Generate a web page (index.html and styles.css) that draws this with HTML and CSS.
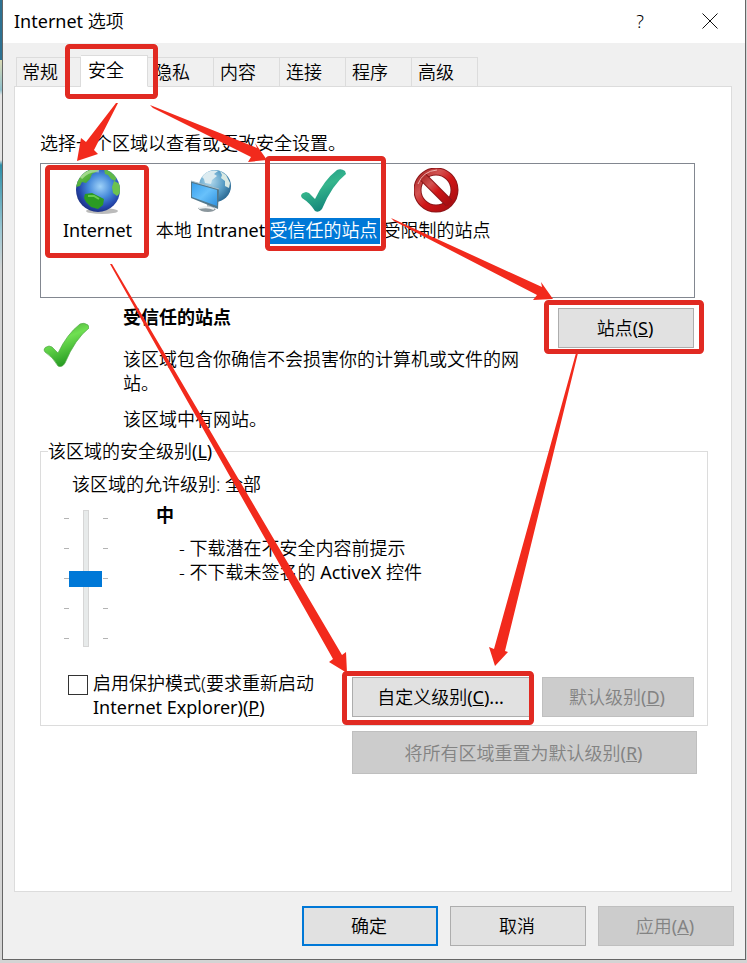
FILE: index.html
```html
<!DOCTYPE html>
<html lang="zh-CN">
<head>
<meta charset="utf-8">
<meta name="viewport" content="width=device-width, initial-scale=1">
<title>Internet 选项</title>
<link rel="stylesheet" href="styles.css">
</head>
<body>
<main class="dialog">
  <header class="titlebar">
    <h1 class="title"><span class="latin">Internet</span> 选项</h1>
    <button class="title-button" type="button" aria-label="帮助">?</button>
    <button class="title-button" type="button" aria-label="关闭">
      <svg width="16" height="16" viewBox="0 0 16 16"><path d="M.5.5l15 15M15.500.5l-15 15" stroke="#111" stroke-width="1" fill="none"/></svg>
    </button>
  </header>

  <nav class="tabs" role="tablist">
    <button class="tab" type="button" role="tab">常规</button>
    <button class="tab tab-active" type="button" role="tab" aria-selected="true">安全</button>
    <button class="tab" type="button" role="tab">隐私</button>
    <button class="tab" type="button" role="tab">内容</button>
    <button class="tab" type="button" role="tab">连接</button>
    <button class="tab" type="button" role="tab">程序</button>
    <button class="tab" type="button" role="tab">高级</button>
  </nav>

  <section class="page">
    <p class="intro">选择一个区域以查看或更改安全设置。</p>

    <div class="zones">
      <button class="zone" type="button">
        <svg class="zone-icon" viewBox="0 0 46 46">
          <defs>
            <radialGradient id="sea" cx=".55" cy=".42" r=".6"><stop offset="0" stop-color="#9fd2f8"/><stop offset=".45" stop-color="#4589da"/><stop offset=".8" stop-color="#2547ad"/><stop offset="1" stop-color="#1b2f80"/></radialGradient>
            <linearGradient id="land" x1="0" y1="0" x2="1" y2="1"><stop offset="0" stop-color="#8edb5a"/><stop offset="1" stop-color="#1f8a24"/></linearGradient>
            <clipPath id="ball"><circle cx="23" cy="22" r="22"/></clipPath>
          </defs>
          <ellipse cx="27" cy="43" rx="16" ry="3" fill="#bbb"/>
          <circle cx="23" cy="22" r="22" fill="url(#sea)"/>
          <g clip-path="url(#ball)">
            <path d="M3 10Q9 1 21 0l4 1-4 3-4 2-2 5-4 4-4-1-2 4-4 1-3-5z" fill="url(#land)"/>
            <path d="M29 1l7 2 6 6-2 4-4-2-3-4-3-1z" fill="#5fb84a"/>
            <path d="M39 13l6 3 1 8-4 4-4-3-1-6z" fill="#6cc24e"/>
            <path d="M10 26l7-1 6 3 6 3-1 6-5 4-7-2-5-5-2-4z" fill="#2b9b23"/>
            <path d="M13 28l6 0 5 3" stroke="#69c94e" stroke-width="2" fill="none"/>
            <path d="M6 10Q14 1 24 3" stroke="#ddf7cf" stroke-width="3" fill="none" opacity=".5"/>
          </g>
        </svg>
        <span class="zone-label latin">Internet</span>
      </button>
      <button class="zone" type="button">
        <svg class="zone-icon" viewBox="0 0 46 46">
          <defs>
            <radialGradient id="sea2" cx=".35" cy=".35" r=".7"><stop offset="0" stop-color="#b5dbee"/><stop offset=".6" stop-color="#5b9fc7"/><stop offset="1" stop-color="#2b6a94"/></radialGradient>
            <linearGradient id="screen" x1="0" y1="0" x2="1" y2="1"><stop offset="0" stop-color="#38a0ed"/><stop offset=".5" stop-color="#68c1fb"/><stop offset="1" stop-color="#2f91df"/></linearGradient>
          </defs>
          <circle cx="27" cy="18" r="16" fill="url(#sea2)"/>
          <path d="M14 9Q20 1 30 3l-4 3 3 2-5 4-1 4-6-1-1-4z" fill="#dcebf0"/>
          <path d="M32 3l6 4 4 8-1 5-4-2 0-5-4-3 1-3z" fill="#d9e9e3"/>
          <path d="M19 34l7 2v5h-7z" fill="#a9b6bc"/>
          <path d="M10 40q10-3 18 1-2 3-8 3-8 0-10-4z" fill="#8b979d"/>
          <path d="M11 40q9-2 15 1" stroke="#eef1f2" stroke-width="2" fill="none"/>
          <path d="M3 13l28 8-1 20L3 30z" fill="#52788c"/>
          <path d="M4 15l25 7v16L4 29z" fill="url(#screen)"/>
          <path d="M3 13l28 8" stroke="#a9c1cc" stroke-width="1" fill="none"/>
        </svg>
        <span class="zone-label">本地 <span class="latin">Intranet</span></span>
      </button>
      <button class="zone" type="button" aria-pressed="true">
        <svg class="zone-icon" viewBox="0 0 46 46">
          <defs><linearGradient id="teal" x1="0" y1="0" x2=".4" y2="1"><stop offset="0" stop-color="#1d9387"/><stop offset=".5" stop-color="#35b58c"/><stop offset="1" stop-color="#14857a"/></linearGradient></defs>
          <path d="M0 28q0-3 5-4l3 1 6 6Q23 12 36 2q4-2 8 1l1 3Q31 17 21 41q-3 4-7 2Q9 35 1 30z" fill="url(#teal)"/>
        </svg>
        <span class="zone-label zone-label-selected">受信任的站点</span>
      </button>
      <button class="zone" type="button">
        <svg class="zone-icon" viewBox="0 0 46 46">
          <defs><linearGradient id="red" x1="0" y1="0" x2="1" y2="1"><stop offset="0" stop-color="#a92524"/><stop offset=".3" stop-color="#d35352"/><stop offset=".55" stop-color="#cf1516"/><stop offset="1" stop-color="#a40d11"/></linearGradient></defs>
          <circle cx="22" cy="22" r="18.500" fill="none" stroke="#8c1518" stroke-width="8"/>
          <circle cx="22" cy="22" r="18.500" fill="none" stroke="url(#red)" stroke-width="6"/>
          <path d="M9 9l26 26" stroke="#8c1518" stroke-width="9"/>
          <path d="M8 8l28 28" stroke="url(#red)" stroke-width="7"/>
          <path d="M4 16Q9 3 23 2" stroke="#efb0ae" stroke-width="1" fill="none"/>
        </svg>
        <span class="zone-label">受限制的站点</span>
      </button>
    </div>

    <div class="summary">
      <svg class="summary-icon" viewBox="0 0 46 46">
        <defs><linearGradient id="green" x1="0" y1="0" x2=".4" y2="1"><stop offset="0" stop-color="#39952d"/><stop offset=".45" stop-color="#70e052"/><stop offset="1" stop-color="#249921"/></linearGradient></defs>
        <path d="M1 28q0-3 5-4l3 1 6 6Q24 12 37 2q4-2 8 1l1 3Q32 17 22 41q-3 5-7 3Q10 35 2 30z" fill="url(#green)" stroke="#50a846" stroke-width=".7"/>
      </svg>
      <div class="summary-text">
        <h2 class="heading">受信任的站点</h2>
        <p class="summary-about">该区域包含你确信不会损害你的计算机或文件的网站。</p>
        <p>该区域中有网站。</p>
      </div>
      <button class="button" type="button">站点<span class="latin">(<u>S</u>)</span></button>
    </div>

    <fieldset class="level">
      <legend><label for="level">该区域的安全级别<span class="latin">(<u>L</u>)</span></label></legend>
      <p class="allowed">该区域的允许级别: 全部</p>
      <div class="level-row">
        <input class="slider" id="level" type="range" min="0" max="4" value="2">
        <div>
          <h2 class="heading">中</h2>
          <ul class="rules">
            <li>- 下载潜在不安全内容前提示</li>
            <li>- 不下载未签名的 <span class="latin">ActiveX</span> 控件</li>
          </ul>
        </div>
      </div>
      <div class="level-actions">
        <input class="check" id="protect" type="checkbox">
        <label class="check-label" for="protect">启用保护模式(要求重新启动 <span class="latin">Internet Explorer)(<u>P</u>)</span></label>
        <button class="button button-custom" type="button">自定义级别<span class="latin">(<u>C</u>)...</span></button>
        <button class="button button-default" type="button" disabled>默认级别<span class="latin">(<u>D</u>)</span></button>
      </div>
    </fieldset>
    <button class="button button-reset" type="button" disabled>将所有区域重置为默认级别<span class="latin">(<u>R</u>)</span></button>
  </section>

  <footer class="footer">
    <button class="button button-primary" type="button">确定</button>
    <button class="button" type="button">取消</button>
    <button class="button" type="button" disabled>应用<span class="latin">(<u>A</u>)</span></button>
  </footer>
</main>

<svg class="marks" width="747" height="963" viewBox="0 0 747 963" aria-hidden="true">
  <g fill="none" stroke="#e12a22" stroke-width="5">
    <rect x="67.500" y="46.500" width="88" height="50" rx="2"/>
    <rect x="47.500" y="167.500" width="99" height="88" rx="2"/>
    <rect x="267.500" y="158.500" width="116" height="90" rx="2"/>
    <rect x="546.500" y="302.500" width="155" height="49" rx="2"/>
    <rect x="344.500" y="673.500" width="187" height="49" rx="2"/>
  </g>
  <g fill="#f22a1c">
    <path d="M116 103h2L94 150l4 4-21 7 4-23 5 4z"/>
    <path d="M150 105l107 43-2-5 12 17-19 2 3-5-98-49z"/>
    <path d="M391 218l151 69-1-5 12 17-20 1 4-5-143-74z"/>
    <path d="M110 264h2l230 391 4-3 1 21-18-11 4-3z"/>
    <path d="M576 353h2l-73 298 3 1-13 14-6-19 5 2z"/>
  </g>
</svg>
</body>
</html>
```
FILE: styles.css
```css
* { box-sizing: border-box; }

html { background: #d4d4d4; }

body {
  margin: 0;
  position: relative;
  background: linear-gradient(#2d7191 0, #2d7191 60px, #d9d9b5 60px, #8fc0cc 90px, #e4e4e4 95px, #e4e4e4 160px, #2d8fa8 165px, #9cc8d4 230px, #d4d4d4 270px) 0 0 / 2px 100% no-repeat;
  color: #000;
  font: 350 18px/24px "Noto Sans", "Noto Sans CJK SC", sans-serif;
}

h1, h2, p, ul { margin: 0; padding: 0; font-size: inherit; }
ul { list-style: none; }
button, input { font: inherit; color: inherit; margin: 0; }
.latin { font-weight: 400; }

.dialog {
  display: flex;
  flex-direction: column;
  min-height: calc(100vh - 3px);
  margin: 0 1px 0 2px;
  border: 1px solid #666;
  border-top: 0;
  background: #f0f0f0;
}

.titlebar {
  display: flex;
  align-items: center;
  height: 43px;
  padding: 0 0 2px 11px;
  background: #fff;
}
.title { flex: 1; font-weight: inherit; }
.title-button {
  display: flex;
  align-items: center;
  justify-content: center;
  width: 70px;
  height: 40px;
  padding: 0;
  border: 0;
  background: none;
}

.tabs {
  display: flex;
  align-items: flex-end;
  height: 44px;
  margin: 0 13px -1px;
}
.tab {
  width: 66px;
  height: 30px;
  padding: 0 6px;
  border: 1px solid #dcdcdc;
  border-left-width: 0;
  background: #f0f0f0;
  text-align: left;
}
.tab:first-child { width: 65px; padding: 0 5px; border-left-width: 1px; }
.tab-active {
  z-index: 1;
  width: 67px;
  height: 32px;
  padding: 0 7px 2px;
  border-bottom-color: #fff;
  background: #fff;
}

.page {
  flex: 1;
  display: flex;
  flex-direction: column;
  margin: 0 13px 0 11px;
  padding: 44px 23px 0 25px;
  border: 1px solid #dcdcdc;
  background: #fff;
}

.zones {
  display: flex;
  align-items: flex-start;
  height: 135px;
  margin: 8px 13px 0 0;
  padding-top: 4px;
  border: 1px solid #828790;
}
.zone {
  display: flex;
  flex-direction: column;
  align-items: center;
  width: 113px;
  padding: 0;
  border: 0;
  background: none;
  white-space: nowrap;
}
.zone-icon { width: 46px; height: 46px; margin-bottom: 4px; }
.zone-label { height: 26px; padding: 0 2px; }
.zone-label-selected { background: #0078d7; color: #fff; }

.summary {
  display: flex;
  align-items: flex-start;
  padding: 7px 14px 0 3px;
}
.summary-icon { width: 46px; height: 46px; margin: 17px 34px 0 0; }
.summary-text { flex: 1; }
.summary .button { margin-top: 3px; margin-left: 32px; }
.summary-about { margin: 18px 0 12px; }
.heading { font-weight: 700; }

.button {
  flex: none;
  width: 136px;
  height: 40px;
  padding: 0 2px 0 0;
  border: 1px solid #adadad;
  background: #e1e1e1;
}
.button:disabled { border-color: #bfbfbf; background: #ccc; color: #838383; }
.button-primary { border: 2px solid #0078d7; }

.level {
  margin: 8px 0 0;
  padding: 9px 13px 6px 23px;
  border: 1px solid #dcdcdc;
}
.level legend { margin-left: -16px; padding: 0; }
.allowed { padding-left: 8px; }
.level-row { display: flex; gap: 48px; margin-top: 7px; }
.rules { padding: 9px 0 0 23px; }

.slider {
  appearance: none;
  writing-mode: vertical-lr;
  width: 44px;
  height: 137px;
  margin-top: 7px;
  background:
    repeating-linear-gradient(#b4b4b4 0 1px, transparent 1px 30px) 0 8px / 5px 121px no-repeat,
    repeating-linear-gradient(#b4b4b4 0 1px, transparent 1px 30px) 100% 8px / 5px 121px no-repeat;
}
.slider::-webkit-slider-runnable-track {
  width: 6px;
  height: 137px;
  border: 1px solid #d6d6d6;
  background: #e7eaea;
}
.slider::-webkit-slider-thumb {
  appearance: none;
  width: 33px;
  height: 16px;
  margin-left: -15px;
  background: #0078d7;
}

.level-actions { display: flex; align-items: flex-start; margin-top: 24px; }
.check {
  appearance: none;
  flex: none;
  width: 20px;
  height: 20px;
  margin: 4px 5px 0 4px;
  border: 1px solid #333;
  background: #fff;
}
.check-label { flex: 1; }
.button-custom { width: 179px; margin: 6px 11px 0 31px; }
.button-default { width: 152px; margin-top: 6px; }
.button-reset { align-self: flex-end; width: 345px; height: 43px; margin: 5px 11px 0 0; }

.footer {
  display: flex;
  justify-content: flex-end;
  gap: 12px;
  padding: 14px 11px 13px;
}

/* Callout boxes and arrows drawn over the dialog */
.marks { position: absolute; top: 0; left: 0; pointer-events: none; }
```
